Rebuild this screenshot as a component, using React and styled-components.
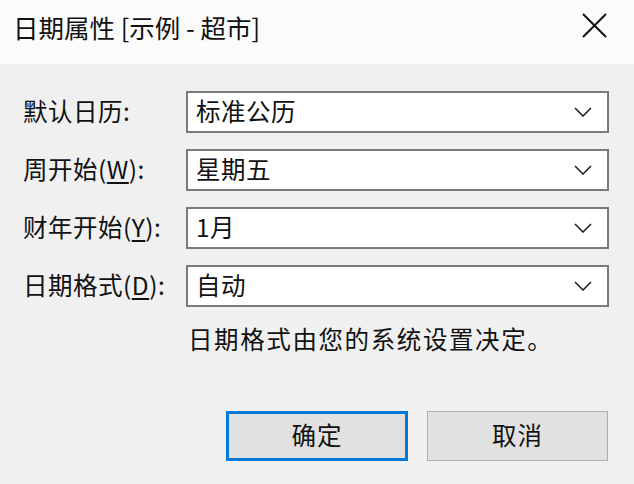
import React from "react";
import styled, { createGlobalStyle } from "styled-components";

const Global = createGlobalStyle`
  html, body { margin: 0; padding: 0; }
  body {
    width: 634px; height: 484px; overflow: hidden;
    background: #f0f0f0;
    font-family: "Noto Sans CJK SC", "Noto Sans", sans-serif;
    color: #111;
  }
`;

const Dialog = styled.div`
  width: 634px; height: 484px;
  display: flex; flex-direction: column;
  background: #f0f0f0;
`;

const TitleBar = styled.div`
  height: 64px; flex: none;
  background: #fbfbfb;
  display: flex; align-items: center; justify-content: space-between;
  padding: 0 27px 10px 13px;
  box-sizing: border-box;
`;

const Title = styled.div`
  font-size: 25.5px; line-height: 30px; color: #111;
`;

const Close = styled.svg`
  width: 25px; height: 25px; display: block; margin-bottom: 4px;
`;

const Form = styled.div`
  display: grid;
  grid-template-columns: 163px 423px;
  grid-auto-rows: 42px;
  row-gap: 16px;
  padding: 27px 0 0 23px;
`;

const Label = styled.div`
  display: flex; align-items: center;
  font-size: 24.5px; line-height: 1; color: #111;
  white-space: nowrap;
  letter-spacing: 0.5px;
  padding-bottom: 2px;
`;

const Key = styled.span`
  text-decoration: underline;
  text-underline-offset: 3px;
  text-decoration-thickness: 2px;
`;

const Select = styled.div`
  box-sizing: border-box;
  border: 2px solid #7a7a7a;
  background: #fff;
  display: flex; align-items: center; justify-content: space-between;
  padding: 0 8px 0 8px;
  font-size: 24.5px; line-height: 1; color: #111;
`;

const Value = styled.span`
  padding-bottom: 2px;
  letter-spacing: 0.5px;
`;

const Chevron = styled.svg`
  width: 18px; height: 10px; display: block; margin-right: 7px;
`;

const Hint = styled.div`
  padding: 17px 0 0 188px;
  font-size: 24.5px; line-height: 30px; color: #111;
  letter-spacing: 1.6px;
`;

const Buttons = styled.div`
  display: flex; gap: 19px;
  padding: 57px 0 0 226px;
`;

const Button = styled.div`
  box-sizing: border-box;
  width: ${(p) => p.$w}px; height: 50px;
  display: flex; align-items: center; justify-content: center;
  background: #e1e1e1;
  border: ${(p) => (p.$primary ? "3px solid #0078d7" : "1.5px solid #adadad")};
  font-size: 24.5px; line-height: 1; color: #111;
  letter-spacing: 1px;
  padding-bottom: 2px;
`;

const fields = [
  { label: <>默认日历:</>, value: "标准公历" },
  { label: <>周开始(<Key>W</Key>):</>, value: "星期五" },
  { label: <>财年开始(<Key>Y</Key>):</>, value: "1月" },
  { label: <>日期格式(<Key>D</Key>):</>, value: "自动" },
];

export default function App() {
  return (
    <Dialog>
      <Global />
      <TitleBar>
        <Title>日期属性 [示例 - 超市]</Title>
        <Close viewBox="0 0 25 25">
          <path d="M1 1 L24 24 M24 1 L1 24" stroke="#111" strokeWidth="2" fill="none" />
        </Close>
      </TitleBar>
      <Form>
        {fields.map((f, i) => (
          <React.Fragment key={i}>
            <Label>{f.label}</Label>
            <Select>
              <Value>{f.value}</Value>
              <Chevron viewBox="0 0 18 10">
                <path d="M1 1 L9 9 L17 1" stroke="#222" strokeWidth="1.6" fill="none" />
              </Chevron>
            </Select>
          </React.Fragment>
        ))}
      </Form>
      <Hint>日期格式由您的系统设置决定。</Hint>
      <Buttons>
        <Button $primary $w={182}>确定</Button>
        <Button $w={181}>取消</Button>
      </Buttons>
    </Dialog>
  );
}
